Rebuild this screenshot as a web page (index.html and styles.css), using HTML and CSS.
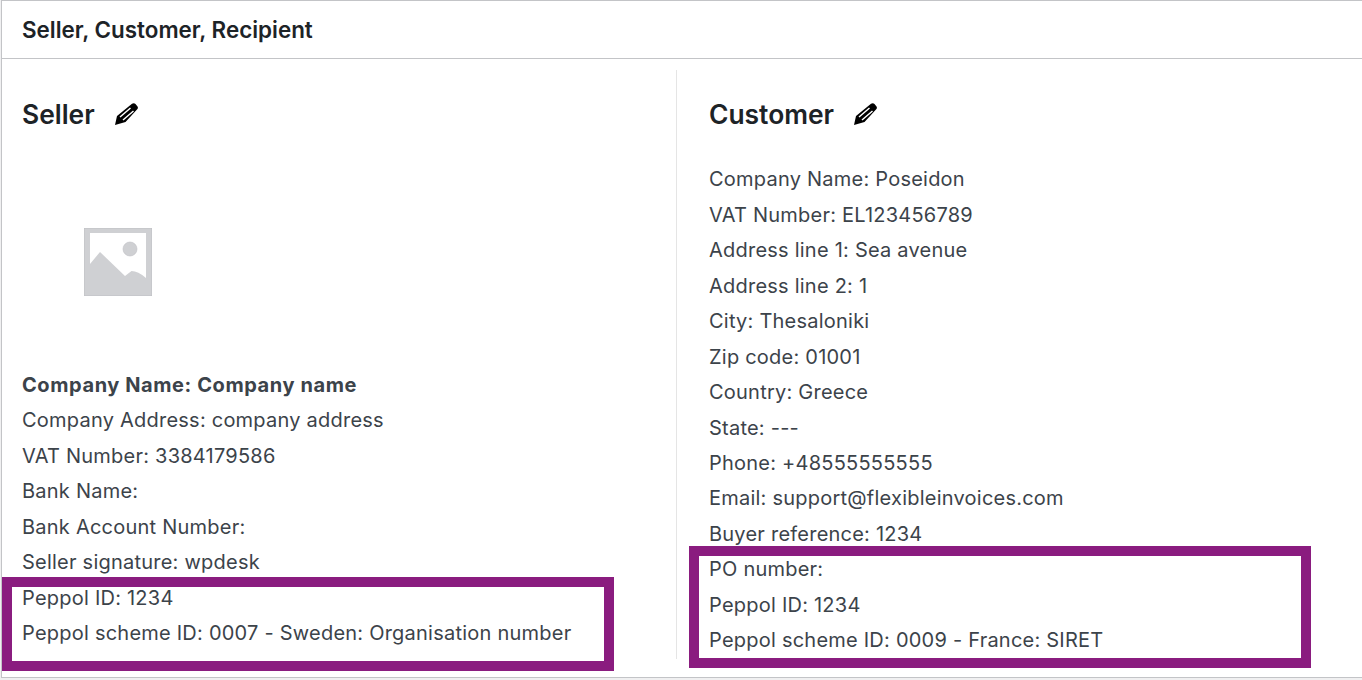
FILE: index.html
```html
<!DOCTYPE html>
<html lang="en">
<head>
<meta charset="utf-8">
<title>Seller, Customer, Recipient</title>
<link rel="stylesheet" href="styles.css">
</head>
<body>
<section class="panel">
  <h2 class="panel-title">Seller, Customer, Recipient</h2>
  <div class="columns">
    <div class="col col-seller">
      <h3 class="col-title">Seller
        <svg class="pencil" viewBox="0 0 24 22"><path d="M0 22 L2 13 L17 .8 Q19 -.5 20.5 1 L22.500 3.500 Q23.500 5 22 6.500 L10.500 19 Z" fill="#000"/><path d="M5 14 L15.500 5 M8 17 L18.500 8" stroke="#fff" stroke-width="1.500" fill="none"/></svg>
      </h3>
      <div class="logo">
        <svg viewBox="0 0 68 68" width="68" height="68">
          <rect width="68" height="68" fill="#cfd0d3"/>
          <path d="M0 0 H68 V68 H0 Z" fill="none" stroke="#bfc0c4" stroke-width="1"/>
          <rect x="6" y="5" width="56" height="50" fill="#fff"/>
          <path d="M6 36 L16 24 L41 48 L47.500 43 Q54 43 62 50 V62 H6 Z" fill="#cfd0d3"/>
          <circle cx="46" cy="21" r="7" fill="#cfd0d3" stroke="#bfc0c4" stroke-width=".6"/>
        </svg>
      </div>
      <div class="rows">
        <p class="row row-strong">Company Name: Company name</p>
        <p class="row">Company Address: company address</p>
        <p class="row">VAT Number: 3384179586</p>
        <p class="row">Bank Name:</p>
        <p class="row">Bank Account Number:</p>
        <p class="row">Seller signature: wpdesk</p>
        <p class="row">Peppol ID: 1234</p>
        <p class="row">Peppol scheme ID: 0007 - Sweden: Organisation number</p>
      </div>
    </div>
    <div class="col col-customer">
      <h3 class="col-title">Customer
        <svg class="pencil" viewBox="0 0 24 22"><path d="M0 22 L2 13 L17 .8 Q19 -.5 20.5 1 L22.500 3.500 Q23.500 5 22 6.500 L10.500 19 Z" fill="#000"/><path d="M5 14 L15.500 5 M8 17 L18.500 8" stroke="#fff" stroke-width="1.500" fill="none"/></svg>
      </h3>
      <div class="rows">
        <p class="row">Company Name: Poseidon</p>
        <p class="row">VAT Number: EL123456789</p>
        <p class="row">Address line 1: Sea avenue</p>
        <p class="row">Address line 2: 1</p>
        <p class="row">City: Thesaloniki</p>
        <p class="row">Zip code: 01001</p>
        <p class="row">Country: Greece</p>
        <p class="row">State: ---</p>
        <p class="row">Phone: +48555555555</p>
        <p class="row">Email: support@flexibleinvoices.com</p>
        <p class="row">Buyer reference: 1234</p>
        <p class="row">PO number:</p>
        <p class="row">Peppol ID: 1234</p>
        <p class="row">Peppol scheme ID: 0009 - France: SIRET</p>
      </div>
    </div>
  </div>
</section>
<div class="mark mark-seller"></div>
<div class="mark mark-customer"></div>
</body>
</html>
```

FILE: styles.css
```css
html, body {
  margin: 0;
  padding: 0;
  background: #f0f0f1;
  height: 680px;
  overflow: hidden;
  font-family: Inter, "Liberation Sans", sans-serif;
}
.panel {
  box-sizing: border-box;
  height: 678px;
  margin-left: 1px;
  background: #fff;
  border: 1px solid #c3c4c7;
  border-right: 0;
}
.panel-title {
  box-sizing: border-box;
  height: 58px;
  margin: 0;
  padding-left: 20px;
  border-bottom: 1px solid #c3c4c7;
  font-size: 22.4px;
  font-weight: 600;
  line-height: 58px;
  color: #1d2327;
}
.columns {
  display: grid;
  grid-template-columns: 675px 1fr;
  margin-top: 11px;
  height: 587px;
}
.col-seller {
  padding-left: 20px;
  border-right: 1px solid #e5e5e5;
}
.col-customer {
  padding-left: 32px;
}
.col-title {
  display: flex;
  align-items: center;
  height: 28px;
  margin: 30px 0 0;
  font-size: 26.4px;
  font-weight: 600;
  line-height: 28px;
  color: #1d2327;
}
.pencil {
  width: 24px;
  height: 22px;
  margin-left: 20px;
}
.logo {
  height: 68px;
  margin: 100px 0 0 62px;
}
.logo svg {
  display: block;
}
.rows {
  margin-top: 34.400px;
}
.col-seller .rows {
  margin-top: 72px;
}
.row {
  margin: 0;
  font-size: 20px;
  letter-spacing: .23px;
  line-height: 35.45px;
  color: #3c434a;
  white-space: nowrap;
}
.row-strong {
  font-weight: 700;
  letter-spacing: .58px;
}
.mark {
  position: absolute;
  box-sizing: border-box;
  border: 10px solid #8a1c7f;
}
.mark-seller {
  left: 2px;
  top: 577px;
  width: 612px;
  height: 94px;
}
.mark-customer {
  left: 689px;
  top: 546px;
  width: 622px;
  height: 122px;
}
```
